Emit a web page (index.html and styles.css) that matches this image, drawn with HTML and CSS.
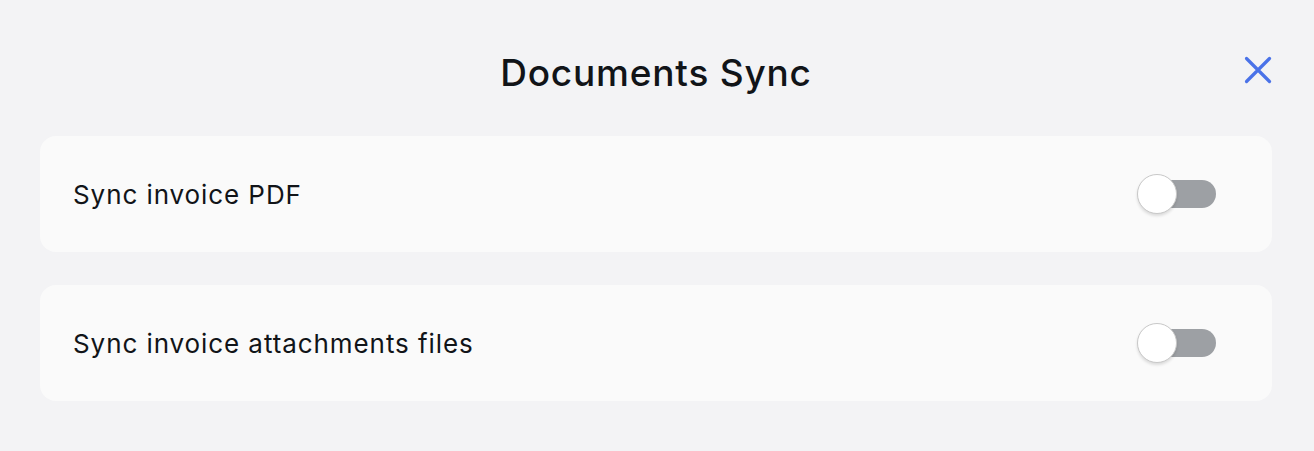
FILE: index.html
```html
<!DOCTYPE html>
<html>
<head>
<meta charset="utf-8">
<link rel="stylesheet" href="styles.css">
</head>
<body>
<div class="modal">
  <header class="header">
    <h1 class="title">Documents Sync</h1>
    <button class="close" aria-label="Close">
      <svg width="28" height="28" viewBox="0 0 28 28"><path d="M2.5 2.5L25.5 25.5M25.5 2.5L2.5 25.5" stroke="#4a72e8" stroke-width="3.2" stroke-linecap="round"/></svg>
    </button>
  </header>
  <div class="list">
    <div class="card">
      <span class="label">Sync invoice PDF</span>
      <span class="toggle"><span class="knob"></span></span>
    </div>
    <div class="card">
      <span class="label">Sync invoice attachments files</span>
      <span class="toggle"><span class="knob"></span></span>
    </div>
  </div>
</div>
</body>
</html>
```

FILE: styles.css
```css
html, body {
  margin: 0;
  padding: 0;
  background: #f3f3f5;
  font-family: Inter, "Noto Sans", sans-serif;
  color: #111418;
}
.modal {
  padding: 0 42px 0 40px;
}
.header {
  position: relative;
  height: 136px;
  display: flex;
  align-items: flex-start;
  justify-content: center;
}
.title {
  margin: 49px 0 0 0;
  font-size: 37px;
  font-weight: 500;
  line-height: 48px;
  letter-spacing: 0.8px;
}
.close {
  position: absolute;
  right: 0;
  top: 56px;
  background: none;
  border: 0;
  padding: 0;
  width: 28px;
  height: 28px;
  cursor: pointer;
}
.close svg { display: block; }
.list {
  display: flex;
  flex-direction: column;
  gap: 33px;
}
.card {
  background: #fafafa;
  border-radius: 16px;
  height: 116px;
  display: flex;
  align-items: center;
  justify-content: space-between;
  padding: 0 56px 0 33px;
}
.label {
  font-size: 26px;
  font-weight: 400;
  letter-spacing: 0.92px;
}
.toggle {
  position: relative;
  width: 76px;
  height: 28px;
  border-radius: 14px;
  background: #9da0a4;
}
.knob {
  position: absolute;
  left: -3px;
  top: -6px;
  width: 40px;
  height: 40px;
  border-radius: 50%;
  background: #fff;
  border: 1px solid #c8c8c8;
  box-sizing: border-box;
  box-shadow: 0 2px 3px rgba(0,0,0,0.12);
}
```
